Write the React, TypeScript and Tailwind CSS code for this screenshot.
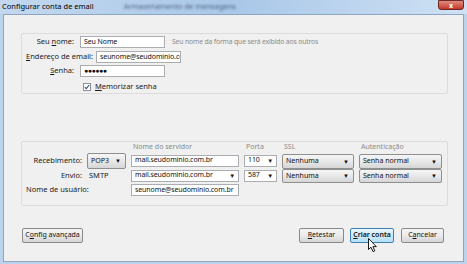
const font = { fontFamily: '"Noto Sans", "Open Sans", sans-serif' };

const Combo = ({ label, className = "" }: { label: string; className?: string }) => (
  <div
    className={`flex h-full items-center justify-between rounded-[2px] border border-[#8e8f8f] bg-linear-to-b from-[#f6f6f6] via-[#e8e8e8] to-[#d6d6d6] pl-[3px] pr-[4px] text-[7px] text-[#111] ${className}`}
  >
    <span>{label}</span>
    <span className="text-[6px] leading-none">▼</span>
  </div>
);

const Field = ({ value, arrow = false, className = "" }: { value: string; arrow?: boolean; className?: string }) => (
  <div
    className={`flex h-[12px] items-center justify-between overflow-hidden whitespace-nowrap border border-[#abadb3] bg-white pl-[3px] pr-[3px] text-[7px] tracking-[-0.1px] text-[#111] ${className}`}
  >
    <span>{value}</span>
    {arrow && <span className="text-[6px] leading-none">▼</span>}
  </div>
);

const Btn = ({ children, hover = false, className = "" }: { children: React.ReactNode; hover?: boolean; className?: string }) => (
  <div
    className={`flex h-[15px] items-center justify-center rounded-[2px] border text-[7px] text-[#111] ${
      hover
        ? "border-[#3c7fb1] bg-linear-to-b from-[#eaf6fd] to-[#b4def8]"
        : "border-[#8a8a8a] bg-linear-to-b from-[#f4f4f4] via-[#ebebeb] to-[#d4d4d4]"
    } ${className}`}
  >
    {children}
  </div>
);

export default function App() {
  return (
    <div style={font} className="relative flex h-[264px] w-[467px] flex-col overflow-hidden bg-[#bcd3ec]">
      {/* title bar */}
      <div className="relative flex h-[14px] items-center bg-linear-to-r from-[#c3d8ef] via-[#a9c7e8] to-[#cfe1f4] px-[2px]">
        <span className="text-[7.5px] text-black">Configurar conta de email</span>
        <span className="ml-[30px] text-[7.5px] text-[#4f6480] blur-[0.8px]">Armazenamento de mensagens</span>
        <div className="absolute right-[3px] top-0 flex h-[10px] w-[26px] items-center justify-center rounded-b-[3px] border border-[#6b2a25] bg-linear-to-b from-[#e08a7e] to-[#c2372a] text-[7px] font-bold leading-none text-white">
          x
        </div>
      </div>

      {/* client */}
      <div className="mx-[3px] mb-[2px] flex flex-1 flex-col border border-[#8fa6c2] bg-[#f0f0f0] pl-[17px] pr-[15px] pt-[18px]">
        {/* top group */}
        <div className="flex h-[61px] flex-col rounded-[2px] border border-[#dcdcdc] pl-[4px] text-[7.5px] text-[#1a1a1a]">
          <div className="mt-[2px] flex h-[12px] items-center">
            <span className="w-[48px] text-right">
              Seu <u>n</u>ome:
            </span>
            <Field value="Seu Nome" className="ml-[6px] w-[85px]" />
            <span className="ml-[7px] text-[6.8px] tracking-[-0.15px] text-[#8a8a8a]">
              Seu nome da forma que será exibido aos outros
            </span>
          </div>
          <div className="mt-[3px] flex h-[12px] items-center">
            <span>
              <u>E</u>ndereço de email:
            </span>
            <Field value="seunome@seudominio.com.br" className="ml-[3px] w-[85px]" />
          </div>
          <div className="mt-[2px] flex h-[12px] items-center">
            <span className="w-[48px] text-right">
              <u>S</u>enha:
            </span>
            <Field value="●●●●●●" className="ml-[6px] w-[85px] text-[6px] tracking-[-0.5px]" />
          </div>
          <div className="mt-[5px] flex h-[9px] items-center pl-[57px]">
            <div className="flex h-[8px] w-[8px] items-center justify-center border border-[#8f8f8f] bg-white">
              <svg width="6" height="6" viewBox="0 0 6 6">
                <path d="M0.8 3.2 L2.3 4.7 L5.2 1" fill="none" stroke="#2b4f85" strokeWidth="1.1" />
              </svg>
            </div>
            <span className="ml-[4px]">
              <u>M</u>emorizar senha
            </span>
          </div>
        </div>

        {/* bottom group */}
        <div className="mt-[47px] h-[65px] rounded-[2px] border border-[#dcdcdc] pl-[4px] pt-[1px] text-[7.5px] text-[#1a1a1a]">
          <div className="grid grid-cols-[56px_39px_108px_33px_72px_83px] grid-rows-[9px_15px_15px_12px] gap-x-[5px]">
            <span />
            <span />
            <span className="self-center pl-[2px] text-[7px] text-[#8a8a8a]">Nome do servidor</span>
            <span className="self-center pl-[2px] text-[7px] text-[#8a8a8a]">Porta</span>
            <span className="self-center pl-[2px] text-[7px] text-[#8a8a8a]">SSL</span>
            <span className="self-center pl-[2px] text-[7px] text-[#8a8a8a]">Autenticação</span>

            <span className="mt-[2px] self-center text-right">Recebimento:</span>
            <div className="mt-[1px] h-[16px]">
              <Combo label="POP3" />
            </div>
            <div className="mt-[2px] self-center">
              <Field value="mail.seudominio.com.br" />
            </div>
            <div className="mt-[2px] self-center">
              <Field value="110" arrow />
            </div>
            <div className="mt-[2px] h-[15px]">
              <Combo label="Nenhuma" />
            </div>
            <div className="mt-[2px] h-[15px]">
              <Combo label="Senha normal" />
            </div>

            <span className="mt-[2px] self-center text-right">Envio:</span>
            <span className="mt-[2px] self-center pl-[2px]">SMTP</span>
            <div className="mt-[2px] self-center">
              <Field value="mail.seudominio.com.br" arrow />
            </div>
            <div className="mt-[2px] self-center">
              <Field value="587" arrow />
            </div>
            <div className="mt-[2px] h-[14px]">
              <Combo label="Nenhuma" />
            </div>
            <div className="mt-[2px] h-[14px]">
              <Combo label="Senha normal" />
            </div>

            <span className="col-span-2 mt-[4px] self-center">Nome de usuário:</span>
            <div className="mt-[4px] self-center">
              <Field value="seunome@seudominio.com.br" className="h-[11px]" />
            </div>
          </div>
        </div>

        {/* buttons */}
        <div className="mt-[22px] flex items-center pl-[1px] pr-[4px]">
          <Btn className="w-[61px]">
            C<u>o</u>nfig avançada
          </Btn>
          <div className="flex-1" />
          <Btn className="w-[45px]">
            <u>R</u>etestar
          </Btn>
          <Btn hover className="ml-[6px] w-[44px] font-semibold">
            <u>C</u>riar conta
          </Btn>
          <Btn className="ml-[7px] w-[43px]">
            C<u>a</u>ncelar
          </Btn>
        </div>
      </div>

      {/* mouse pointer */}
      <svg className="absolute left-[368px] top-[238px]" width="10" height="15" viewBox="0 0 10 15">
        <path d="M0.5 0.5 L0.5 11.5 L3 9.2 L5 13.6 L6.8 12.8 L4.9 8.6 L8.3 8.6 Z" fill="white" stroke="black" strokeWidth="0.9" />
      </svg>
    </div>
  );
}
